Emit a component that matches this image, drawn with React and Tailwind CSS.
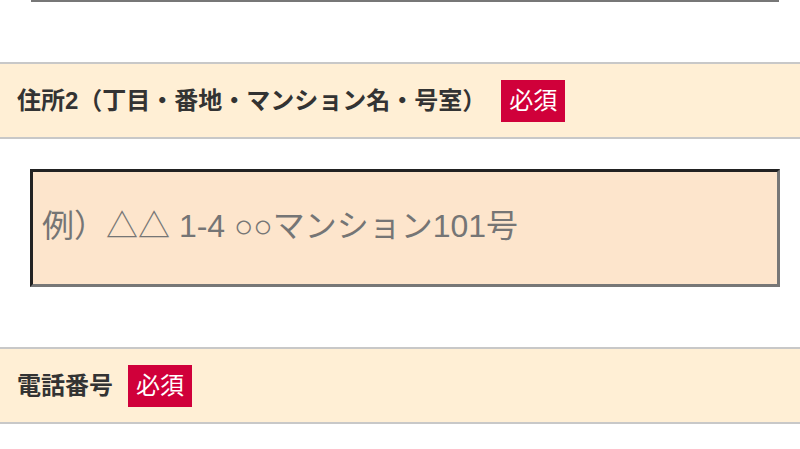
const font = { fontFamily: '"Liberation Sans", "Noto Sans CJK JP", sans-serif' }

function Required() {
  return (
    <span className="inline-flex items-center justify-center h-[42px] px-[8px] bg-[#d0003a] text-white text-[24px] font-normal leading-none">
      必須
    </span>
  )
}

function FieldHeader({ label }) {
  return (
    <div className="flex items-center h-[77px] border-y-2 border-[#c8c8c8] bg-[#ffefd5] pl-[17px]">
      <span className="text-[24px] font-bold text-[#333] mr-[15px]">{label}</span>
      <Required />
    </div>
  )
}

export default function App() {
  return (
    <div className="w-[800px] h-[449px] bg-white overflow-hidden" style={font}>
      {/* end of the previous input */}
      <div className="ml-[31px] mr-[21px] h-[2px] bg-[#777]" />

      <div className="mt-[60px]">
        <FieldHeader label="住所2（丁目・番地・マンション名・号室）" />
      </div>

      <div className="pt-[30px] pb-[60px] pl-[30px] pr-[20px]">
        <input
          type="text"
          placeholder="例）△△ 1-4 ○○マンション101号"
          className="block w-full h-[118px] border-[3px] border-t-[#222] border-l-[#222] border-b-[#777] border-r-[#777] bg-[#fde5cc] px-[9px] pb-[4px] text-[32px] text-[#333] placeholder:text-[#757575] outline-none"
          style={font}
        />
      </div>

      <FieldHeader label="電話番号" />
    </div>
  )
}
